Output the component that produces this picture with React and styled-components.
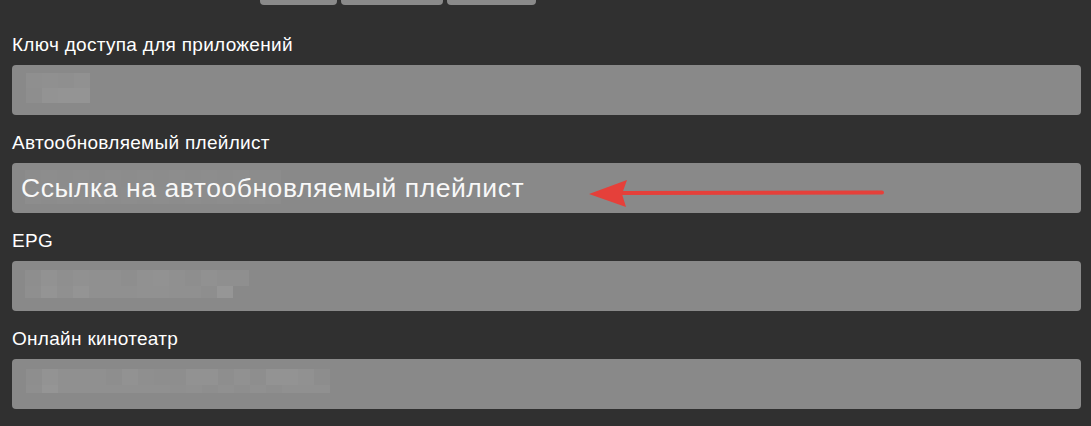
import React from 'react';
import styled, { createGlobalStyle } from 'styled-components';

const GlobalStyle = createGlobalStyle`
  html, body {
    margin: 0;
    padding: 0;
    background: #303030;
    overflow: hidden;
  }
  body {
    font-family: 'Liberation Sans', Arial, sans-serif;
  }
`;

const Page = styled.div`
  width: 1091px;
  height: 426px;
  padding: 0 10px 0 12px;
  box-sizing: border-box;
  background: #303030;
  overflow: hidden;
`;

const TabRow = styled.div`
  display: flex;
  gap: 4px;
  margin-top: -27px;
  padding-left: 248px;
  margin-bottom: 29px;
`;

const Tab = styled.button`
  width: ${(props) => props.w}px;
  height: 32px;
  border: none;
  border-radius: 4px;
  background: #8a8a8a;
  padding: 0;
`;

const Field = styled.div`
  display: flex;
  flex-direction: column;
  margin-bottom: 17px;
`;

const Label = styled.label`
  color: #ffffff;
  font-size: 19px;
  letter-spacing: 0.3px;
  line-height: 22px;
  margin-bottom: 9px;
`;

const InputBox = styled.div`
  position: relative;
  height: 50px;
  border-radius: 4px;
  background: #898989;
  display: flex;
  align-items: center;
  padding-left: 9px;
  color: #f8f8f8;
  font-size: 26.5px;
  letter-spacing: 0.55px;
`;

const Blur = styled.div`
  position: absolute;
  left: ${(props) => props.left}px;
  top: ${(props) => props.top}px;
  display: flex;
  flex-direction: column;
`;

const BlurRow = styled.div`
  display: flex;
  height: ${(props) => props.h}px;
`;

const Cell = styled.div`
  width: 16px;
  height: 100%;
`;

const InputText = styled.span`
  position: relative;
  z-index: 1;
`;

const Arrow = styled.svg`
  position: absolute;
  left: 560px;
  top: 10px;
  z-index: 2;
`;

const shade = (n) => {
  const v = 0x8a + n;
  const h = v.toString(16);
  return `#${h}${h}${h}`;
};

const Pixelated = ({ left, top, rows }) => (
  <Blur left={left} top={top}>
    {rows.map((row, i) => (
      <BlurRow key={i} h={row.h}>
        {row.cells.map((c, j) => (
          <Cell key={j} style={{ background: shade(c) }} />
        ))}
      </BlurRow>
    ))}
  </Blur>
);

const keyRows = [
  { h: 15, cells: [5, 6, 5, 7] },
  { h: 15, cells: [4, 9, 10, 10] },
];

const epgRows = [
  { h: 16, cells: [4, 8, 5, 7, 6, 6, 4, 7, 8, 6, 4, 7, 5, 5] },
  { h: 12, cells: [5, 10, 6, 10, 6, 6, 6, 7, 7, 6, 6, 4, 12] },
];

const cinemaRows = [
  { h: 16, cells: [4, 9, 6, 6, 6, 4, 8, 5, 4, 4, 8, 8, 4, 7, 4, 9, 9, 7, 3] },
  { h: 8, cells: [5, 11, 6, 6, 6, 6, 6, 6, 6, 5, 6, 4, 6, 4, 6, 4, 6, 6, 6] },
];

const playlistRows = [
  { h: 17, cells: [2, 3, 2, 3, 2, 3, 2, 3, 2, 3, 2, 3, 2, 3, 2, 2] },
  { h: 17, cells: [3, 2, 3, 2, 3, 2, 3, 2, 3, 2, 3, 2, 3, 2, 3, 2] },
];

const App = () => {
  return (
    <>
      <GlobalStyle />
      <Page>
        <TabRow>
          <Tab w={77} />
          <Tab w={102} />
          <Tab w={89} />
        </TabRow>

        <Field>
          <Label>Ключ доступа для приложений</Label>
          <InputBox>
            <Pixelated left={14} top={8} rows={keyRows} />
          </InputBox>
        </Field>

        <Field>
          <Label>Автообновляемый плейлист</Label>
          <InputBox>
            <Pixelated left={13} top={7} rows={playlistRows} />
            <InputText>Ссылка на автообновляемый плейлист</InputText>
            <Arrow width="320" height="40" viewBox="0 0 320 40">
              <line
                x1="48"
                y1="20"
                x2="310"
                y2="19.5"
                stroke="#e5403a"
                strokeWidth="4"
                strokeLinecap="round"
              />
              <polygon points="17,21 55,7 50,21 54,34" fill="#e5403a" />
            </Arrow>
          </InputBox>
        </Field>

        <Field>
          <Label>EPG</Label>
          <InputBox>
            <Pixelated left={13} top={9} rows={epgRows} />
          </InputBox>
        </Field>

        <Field>
          <Label>Онлайн кинотеатр</Label>
          <InputBox>
            <Pixelated left={14} top={10} rows={cinemaRows} />
          </InputBox>
        </Field>
      </Page>
    </>
  );
};

export default App;
